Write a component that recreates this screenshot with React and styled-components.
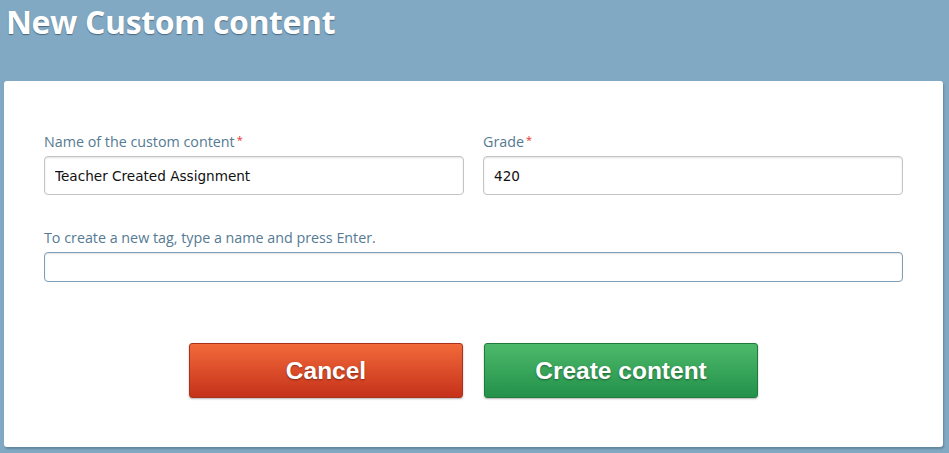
import React, { useState } from "react";
import styled, { createGlobalStyle } from "styled-components";

const GlobalStyle = createGlobalStyle`
  html, body {
    margin: 0;
    padding: 0;
    background: #82a9c3;
  }
  * {
    box-sizing: border-box;
  }
`;

const Page = styled.div`
  width: 949px;
  height: 453px;
  overflow: hidden;
  background: #82a9c3;
  padding: 0 6px 0 4px;
`;

const Title = styled.h1`
  margin: 0;
  padding: 0 0 0 2px;
  height: 81px;
  font-family: "Open Sans", "Noto Sans", sans-serif;
  font-weight: 700;
  font-size: 32px;
  line-height: 44px;
  letter-spacing: -0.4px;
  color: #ffffff;
  text-shadow: 0 1px 1px rgba(40, 60, 80, 0.6);
`;

const Card = styled.div`
  background: #ffffff;
  border-radius: 3px;
  height: 366px;
  padding: 50px 40px 0 40px;
  box-shadow: 1px 2px 2px rgba(60, 90, 110, 0.45);
  display: flex;
  flex-direction: column;
`;

const Row = styled.div`
  display: flex;
  gap: 19px;
  margin-bottom: ${(p) => p.$gap || 0}px;
`;

const Field = styled.div`
  flex: 1;
  display: flex;
  flex-direction: column;
`;

const Label = styled.label`
  font-family: "Open Sans", "Noto Sans", sans-serif;
  font-size: 14.3px;
  line-height: 18px;
  color: #557a93;
  margin-bottom: 5px;
`;

const Req = styled.span`
  color: #e8302b;
  font-size: 11px;
  margin-left: 2px;
  vertical-align: 3px;
`;

const Input = styled.input`
  width: 100%;
  height: ${(p) => p.$h || 39}px;
  border: 1px solid ${(p) => (p.$focus ? "#7e9fb7" : "#c4c4c4")};
  border-radius: 4px;
  padding: 0 10px;
  font-family: "DejaVu Sans", Verdana, sans-serif;
  font-size: 13.6px;
  color: #111;
  background: #fff;
  box-shadow: inset 0 1px 2px rgba(0, 0, 0, 0.12);
  outline: none;
`;

const Actions = styled.div`
  display: flex;
  justify-content: center;
  gap: 21px;
  margin-top: 61px;
`;

const Button = styled.button`
  width: 274px;
  height: 55px;
  border-radius: 3px;
  border: 1px solid ${(p) => (p.$variant === "green" ? "#1f7a3c" : "#a8321a")};
  background: ${(p) =>
    p.$variant === "green"
      ? "linear-gradient(#4cb96a, #23914a)"
      : "linear-gradient(#f26a3a, #c5311a)"};
  color: #fff;
  font-family: "Liberation Sans", Arial, sans-serif;
  font-weight: 700;
  font-size: 24.5px;
  text-shadow: 0 1px 2px rgba(0, 0, 0, 0.4);
  box-shadow: 0 1px 2px rgba(0, 0, 0, 0.3);
  cursor: pointer;
`;

const App = () => {
  const [name, setName] = useState("Teacher Created Assignment");
  const [grade, setGrade] = useState("420");
  const [tag, setTag] = useState("");

  return (
    <>
      <GlobalStyle />
      <Page>
        <Title>New Custom content</Title>
        <Card>
          <Row $gap={34}>
            <Field>
              <Label>
                Name of the custom content<Req>*</Req>
              </Label>
              <Input value={name} onChange={(e) => setName(e.target.value)} />
            </Field>
            <Field>
              <Label>
                Grade<Req>*</Req>
              </Label>
              <Input value={grade} onChange={(e) => setGrade(e.target.value)} />
            </Field>
          </Row>
          <Row>
            <Field>
              <Label>To create a new tag, type a name and press Enter.</Label>
              <Input
                $h={30}
                $focus
                value={tag}
                onChange={(e) => setTag(e.target.value)}
              />
            </Field>
          </Row>
          <Actions>
            <Button $variant="red">Cancel</Button>
            <Button $variant="green">Create content</Button>
          </Actions>
        </Card>
      </Page>
    </>
  );
};

export default App;
